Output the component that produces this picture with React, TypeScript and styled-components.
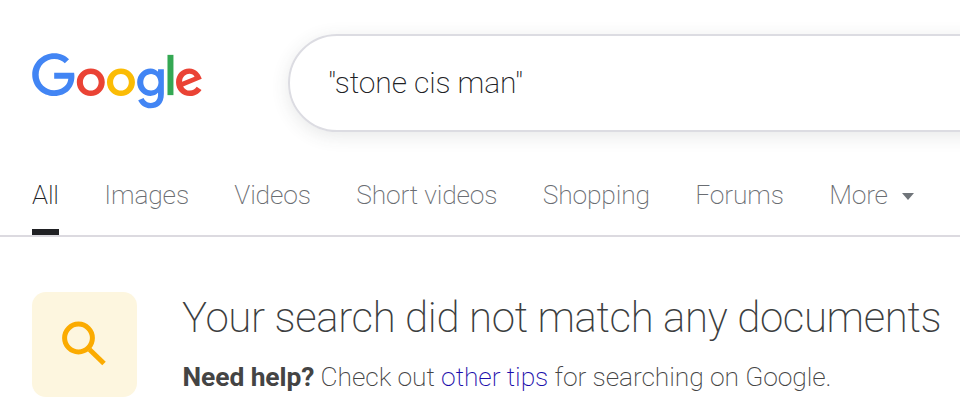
import React from "react";
import styled, { createGlobalStyle } from "styled-components";

const GlobalStyle = createGlobalStyle`
  * { box-sizing: border-box; }
  body { margin: 0; background: #fff; font-family: Roboto, sans-serif; font-weight: 160; overflow: hidden; }
`;
const Page = styled.div`width: 960px; height: 410px; overflow: hidden; background: #fff;`;
const Header = styled.header`display: flex; height: 170px; padding: 34px 0 0 32px;`;
const Logo = styled.svg`width: 171px; height: 57px; margin-top: 18.5px; flex: none;`;
const SearchBox = styled.div`
  flex: none; width: 760px; height: 98px; margin-left: 85px; padding: 0 38px 2px;
  display: flex; align-items: center; border: 2px solid #dcdce2; border-radius: 49px;
  box-shadow: 0 4px 18px rgba(60, 64, 67, 0.12); color: #202124; font-size: 30px; letter-spacing: -0.1px;
`;
const Tabs = styled.nav`
  display: flex; gap: 45.4px; height: 67px; padding-left: 32px; border-bottom: 2px solid #dcdae0;
`;
const Tab = styled.a<{ $active?: boolean }>`
  height: 65px; line-height: 51px; font-size: 26.4px; letter-spacing: -0.16px; white-space: nowrap;
  color: ${(p) => (p.$active ? "#202124" : "#6a6d72")};
  border-bottom: 6px solid ${(p) => (p.$active ? "#202124" : "transparent")};
`;
const Caret = styled.svg`width: 12px; height: 7px; margin-left: 14px; vertical-align: 4px;`;
const Result = styled.main`display: flex; gap: 45px; padding: 55px 0 0 32px;`;
const Tile = styled.div`
  flex: none; display: flex; width: 105px; height: 105px; border-radius: 14px; background: #fdf6df;
`;
const Title = styled.h1`
  margin: 0; font-size: 42px; line-height: 52px; font-weight: 160; letter-spacing: -0.35px; color: #3c3e40; white-space: nowrap;
`;
const Help = styled.p`margin: 16px 0 0; padding-left: 0.5px; font-size: 26.4px; letter-spacing: -0.08px; line-height: 34px; color: #444; white-space: nowrap;`;
const Strong = styled.strong`font-weight: 700;`;
const TipLink = styled.a`color: #1a0dab;`;

const tabs = ["All", "Images", "Videos", "Short videos", "Shopping", "Forums"];

export default function App() {
  return (
    <Page>
      <GlobalStyle />
      <Header>
        <Logo viewBox="0 0 272 92" preserveAspectRatio="none" aria-label="Google">
          <path fill="#EA4335" d="M115.75 47.18c0 12.77-9.99 22.18-22.25 22.18s-22.25-9.41-22.25-22.18C71.25 34.32 81.24 25 93.5 25s22.25 9.32 22.25 22.18zm-9.74 0c0-7.98-5.79-13.44-12.51-13.44S80.99 39.2 80.99 47.18c0 7.9 5.79 13.44 12.51 13.44s12.51-5.55 12.51-13.44z" />
          <path fill="#FBBC05" d="M163.75 47.18c0 12.77-9.99 22.18-22.25 22.18s-22.25-9.41-22.25-22.18c0-12.85 9.99-22.18 22.25-22.18s22.25 9.32 22.25 22.18zm-9.74 0c0-7.98-5.79-13.44-12.51-13.44s-12.51 5.46-12.51 13.44c0 7.9 5.79 13.44 12.51 13.44s12.51-5.55 12.51-13.44z" />
          <path fill="#4285F4" d="M209.75 26.34v39.82c0 16.38-9.66 23.07-21.08 23.07-10.75 0-17.22-7.19-19.66-13.07l8.48-3.53c1.51 3.61 5.21 7.87 11.17 7.87 7.31 0 11.84-4.51 11.84-13v-3.19h-.34c-2.18 2.69-6.38 5.04-11.68 5.04-11.09 0-21.25-9.66-21.25-22.09 0-12.52 10.16-22.26 21.25-22.26 5.29 0 9.49 2.35 11.68 4.96h.34v-3.61h9.25zm-8.56 20.92c0-7.81-5.21-13.52-11.84-13.52-6.72 0-12.35 5.71-12.35 13.52 0 7.73 5.63 13.36 12.35 13.36 6.63 0 11.84-5.63 11.84-13.36z" />
          <path fill="#34A853" d="M225 3v65h-9.5V3h9.5z" />
          <path fill="#EA4335" d="M262.02 54.48l7.56 5.04c-2.44 3.61-8.32 9.83-18.48 9.83-12.6 0-22.01-9.74-22.01-22.18 0-13.19 9.49-22.18 20.92-22.18 11.51 0 17.14 9.16 18.98 14.11l1.01 2.52-29.65 12.28c2.27 4.45 5.8 6.72 10.75 6.72 4.96 0 8.4-2.44 10.92-6.14zm-23.27-7.98l19.82-8.23c-1.09-2.77-4.37-4.7-8.23-4.7-4.95 0-11.84 4.37-11.59 12.93z" />
          <path fill="#4285F4" d="M35.29 41.41V32H67c.31 1.64.47 3.58.47 5.68 0 7.06-1.93 15.79-8.15 22.01-6.05 6.3-13.78 9.66-24.02 9.66C16.32 69.35.36 53.89.36 34.91.36 15.93 16.32.47 35.3.47c10.5 0 17.98 4.12 23.6 9.49l-6.64 6.64c-4.03-3.78-9.49-6.72-16.97-6.72-13.86 0-24.7 11.17-24.7 25.03 0 13.86 10.84 25.03 24.7 25.03 8.99 0 14.11-3.61 17.39-6.89 2.66-2.66 4.41-6.46 5.1-11.65l-22.49.01z" />
        </Logo>
        <SearchBox>"stone cis man"</SearchBox>
      </Header>
      <Tabs>
        {tabs.map((t, i) => <Tab key={t} $active={i === 0}>{t}</Tab>)}
        <Tab>More<Caret viewBox="0 0 12 7"><path d="M0 0h12L6 7z" fill="#70757a" /></Caret></Tab>
      </Tabs>
      <Result>
        <Tile>
          <svg width="105" height="105" viewBox="0 0 105 105" fill="none" stroke="#fbab00">
            <circle cx="46.5" cy="46" r="13.9" strokeWidth="5" />
            <path d="M57.5 57.5l14.5 14" strokeWidth="5" />
          </svg>
        </Tile>
        <div>
          <Title>Your search did not match any documents</Title>
          <Help><Strong>Need help?</Strong> Check out <TipLink>other tips</TipLink> for searching on Google.</Help>
        </div>
      </Result>
    </Page>
  );
}
